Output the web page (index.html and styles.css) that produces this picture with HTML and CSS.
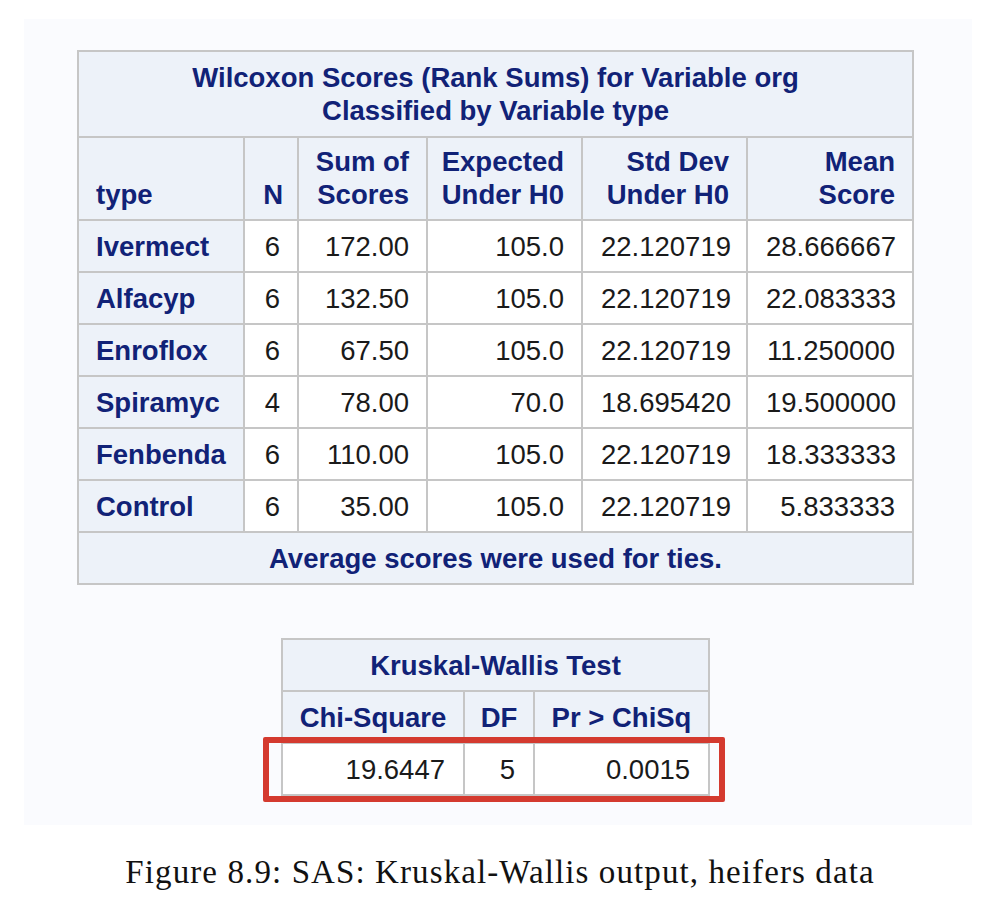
FILE: index.html
```html
<!DOCTYPE html>
<html>
<head>
<meta charset="utf-8">
<link rel="stylesheet" href="styles.css">
</head>
<body>
<div class="panel">
  <table class="sas wil">
    <colgroup>
      <col class="c1"><col class="c2"><col class="c3"><col class="c4"><col class="c5"><col class="c6">
    </colgroup>
    <thead>
      <tr class="title"><th colspan="6">Wilcoxon Scores (Rank Sums) for Variable org<br>Classified by Variable type</th></tr>
      <tr class="head">
        <th class="l">type</th>
        <th class="r">N</th>
        <th class="r">Sum of<br>Scores</th>
        <th class="r">Expected<br>Under H0</th>
        <th class="r">Std Dev<br>Under H0</th>
        <th class="r">Mean<br>Score</th>
      </tr>
    </thead>
    <tbody>
      <tr><th class="l">Ivermect</th><td>6</td><td>172.00</td><td>105.0</td><td>22.120719</td><td>28.666667</td></tr>
      <tr><th class="l">Alfacyp</th><td>6</td><td>132.50</td><td>105.0</td><td>22.120719</td><td>22.083333</td></tr>
      <tr><th class="l">Enroflox</th><td>6</td><td>67.50</td><td>105.0</td><td>22.120719</td><td>11.250000</td></tr>
      <tr><th class="l">Spiramyc</th><td>4</td><td>78.00</td><td>70.0</td><td>18.695420</td><td>19.500000</td></tr>
      <tr><th class="l">Fenbenda</th><td>6</td><td>110.00</td><td>105.0</td><td>22.120719</td><td>18.333333</td></tr>
      <tr><th class="l">Control</th><td>6</td><td>35.00</td><td>105.0</td><td>22.120719</td><td>5.833333</td></tr>
    </tbody>
    <tfoot>
      <tr class="foot"><th colspan="6">Average scores were used for ties.</th></tr>
    </tfoot>
  </table>

  <div class="kw-wrap">
    <table class="sas kw">
      <colgroup>
        <col class="k1"><col class="k2"><col class="k3">
      </colgroup>
      <thead>
        <tr class="ktitle"><th colspan="3">Kruskal-Wallis Test</th></tr>
        <tr class="khead"><th>Chi-Square</th><th>DF</th><th>Pr &gt; ChiSq</th></tr>
      </thead>
      <tbody>
        <tr class="krow"><td>19.6447</td><td>5</td><td>0.0015</td></tr>
      </tbody>
    </table>
    <div class="highlight"></div>
  </div>
</div>
<p class="caption">Figure 8.9: SAS: Kruskal-Wallis output, heifers data</p>
</body>
</html>
```

FILE: styles.css
```css
html, body {
  margin: 0;
  padding: 0;
  background: #ffffff;
}

.panel {
  margin: 19px 0 0 24px;
  width: 948px;
  height: 806px;
  box-sizing: border-box;
  padding: 31px 0 0 53px;
  background: #fafbfe;
}

.sas {
  border-collapse: collapse;
  table-layout: fixed;
  font-family: "Liberation Sans", Arial, sans-serif;
  font-size: 27.5px;
  line-height: 33px;
  border: 2px solid #c6c6c6;
}

.sas th,
.sas td {
  border: 2px solid #c6c6c6;
  padding: 0 17px 0 18px;
  white-space: nowrap;
}

.sas th {
  background: #edf2f9;
  color: #112277;
  font-weight: bold;
}

.sas td {
  background: #ffffff;
  color: #1a1a1a;
  text-align: right;
  font-weight: normal;
}

.wil {
  width: 835px;
}

.c1 { width: 166px; }
.c2 { width: 54px; }
.c3 { width: 129px; }
.c4 { width: 155px; }
.c5 { width: 165px; }
.c6 { width: 166px; }

.wil .title th {
  height: 84px;
  text-align: center;
  padding: 0;
}

.wil .head th {
  height: 73px;
  vertical-align: bottom;
  padding: 0 17px 8px 0;
}

.wil .head th.l {
  text-align: left;
  padding-left: 17px;
}
.wil .head th.r { text-align: right; }

.wil .head th:nth-child(2) { padding: 0 14px 8px 0; }
.wil tbody td:nth-child(2) { padding: 0 17px 0 0; }

.wil tbody th,
.wil tbody td {
  height: 50px;
  vertical-align: middle;
}

.wil tbody th.l {
  text-align: left;
  padding-left: 17px;
}

.wil .foot th {
  height: 50px;
  text-align: center;
  padding: 0;
}

.kw-wrap {
  position: relative;
  width: 427px;
  margin: 53px 0 0 204px;
}

.kw {
  width: 427px;
}

.k1 { width: 182px; }
.k2 { width: 70px; }
.k3 { width: 175px; }

.kw .ktitle th,
.kw .khead th {
  height: 50px;
  text-align: center;
  padding: 0;
}

.kw .krow td {
  height: 50px;
  padding: 0 18px 0 0;
}

.highlight {
  position: absolute;
  left: -18px;
  top: 99px;
  width: 462px;
  height: 65px;
  box-sizing: border-box;
  border: 6px solid #d43a2f;
  border-radius: 2px;
}

.caption {
  margin: 29px 0 0 0;
  text-align: center;
  font-family: "Liberation Serif", "Times New Roman", serif;
  font-size: 33px;
  line-height: 36px;
  letter-spacing: 1.1px;
  color: #111111;
}
```
